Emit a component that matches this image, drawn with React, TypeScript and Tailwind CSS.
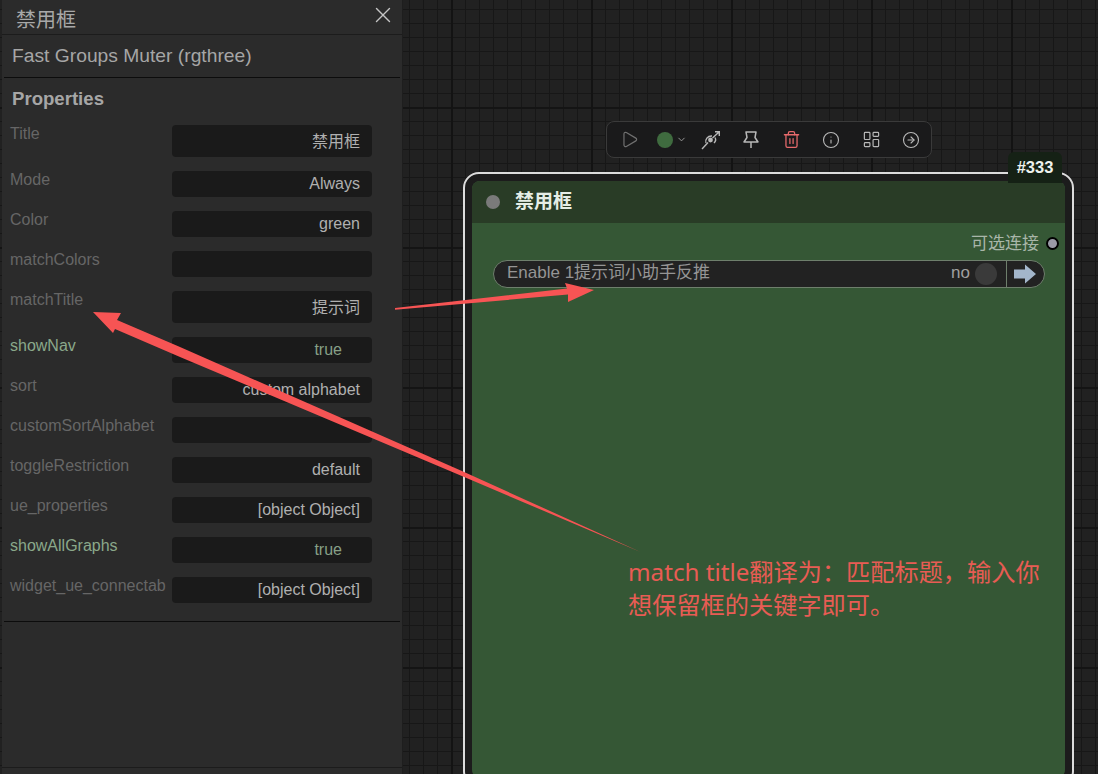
import { ChevronDown, CircleArrowRight, Info, LayoutDashboard, Play, Trash2, X } from "lucide-react"

const rows = [
  { label: "Title", value: "禁用框", tall: true },
  { label: "Mode", value: "Always" },
  { label: "Color", value: "green" },
  { label: "matchColors", value: "" },
  { label: "matchTitle", value: "提示词", tall: true },
  { label: "showNav", value: "true", bool: true },
  { label: "sort", value: "custom alphabet" },
  { label: "customSortAlphabet", value: "" },
  { label: "toggleRestriction", value: "default" },
  { label: "ue_properties", value: "[object Object]" },
  { label: "showAllGraphs", value: "true", bool: true },
  { label: "widget_ue_connectab", value: "[object Object]" },
]

function PropRow({ label, value, tall, bool }: { label: string; value: string; tall?: boolean; bool?: boolean }) {
  return (
    <div className="flex items-start">
      <div className={`w-[162px] shrink-0 whitespace-nowrap text-[16px] leading-[18px] ${bool ? "text-[#8aa88a]" : "text-[#666666]"}`}>
        {label}
      </div>
      <div
        className={`flex w-[200px] items-center justify-end rounded-[4px] bg-[#1a1a1a] text-[16px] ${tall ? "h-8 pt-[2px]" : "h-[26px]"} ${bool ? "pr-[30px] text-[#87a087]" : "pr-3 text-[#b0b0b0]"}`}
      >
        {value}
      </div>
    </div>
  )
}

function Panel() {
  return (
    <div className="ml-[2px] flex h-[774px] w-[401px] shrink-0 flex-col border-r border-[#1e1e1e] bg-[#2b2b2b]">
      <div className="flex h-[35px] shrink-0 items-center justify-between border-b border-[#1c1c1c] pl-[14px] pr-[6px]">
        <span className="pt-[6px] text-[20px] text-[#a8a8a8]">禁用框</span>
        <X size={26} strokeWidth={1.3} className="mb-[5px] text-[#c4c4c4]" />
      </div>
      <div className="mx-[2px] flex h-[43px] shrink-0 items-center border-b border-[#0c0c0c] pl-2 text-[19.25px] text-[#a6a6a6]">
        Fast Groups Muter (rgthree)
      </div>
      <div className="mx-[2px] shrink-0 border-b border-[#0c0c0c] pb-[18px]">
        <div className="h-[47px] pl-2 pt-[10px] text-[18.6px] font-bold leading-[22px] text-[#a6a6a6]">Properties</div>
        <div className="flex flex-col gap-[14px] pl-[6px]">
          {rows.map((r) => (
            <PropRow key={r.label} {...r} />
          ))}
        </div>
      </div>
      <div className="flex-1" />
      <div className="h-[7px] shrink-0 border-t border-[#1c1c1c]" />
    </div>
  )
}

function Toolbar() {
  return (
    <div className="absolute left-[606px] top-[121px] flex h-[37px] w-[326px] items-center rounded-lg border border-[#3a3a3a] bg-[#1a1a1b] pl-[3px] text-[#b8b8b8]">
      <div className="flex w-10 justify-center">
        <Play size={19} strokeWidth={1.5} className="-ml-[2px] text-[#707070]" />
      </div>
      <div className="flex w-[41px] items-center justify-center gap-[3px] pl-[2px]">
        <div className="h-4 w-4 rounded-full bg-[#3f6b3f]" />
        <ChevronDown size={11} strokeWidth={2} className="text-[#a0a0a0]" />
      </div>
      <div className="flex w-10 justify-center">
        <svg width="20" height="20" viewBox="0 0 20 20" fill="none" stroke="currentColor" strokeWidth="1.4">
          <path d="M1 19L7 12.5" />
          <circle cx="9.5" cy="10" r="2.4" fill="currentColor" stroke="none" />
          <path d="M5 13C3.8 9.5 6.5 5.8 11 6" />
          <path d="M14 7.5C15.2 9.5 14.6 11.5 13 13" />
          <path d="M11.5 8L18 2M14 1.8H18.3V6" />
        </svg>
      </div>
      <div className="flex w-10 justify-center">
        <svg width="18" height="20" viewBox="0 0 18 20" fill="none" stroke="currentColor" strokeWidth="1.5">
          <path d="M4 2H14L13 7.5L16 12H2L5 7.5Z" strokeLinejoin="round" />
          <path d="M9 12V18" />
        </svg>
      </div>
      <div className="flex w-10 justify-center">
        <Trash2 size={19} strokeWidth={1.6} className="text-[#e86a6c]" />
      </div>
      <div className="flex w-10 justify-center">
        <Info size={18} strokeWidth={1.5} />
      </div>
      <div className="flex w-10 justify-center">
        <LayoutDashboard size={19} strokeWidth={1.5} />
      </div>
      <div className="flex w-10 justify-center">
        <CircleArrowRight size={18} strokeWidth={1.5} />
      </div>
    </div>
  )
}

function Node() {
  return (
    <div className="absolute left-[463px] top-[172px] h-[615px] w-[611px] rounded-[16px] border-2 border-[#dcdcdc] bg-[#1c1c1c] p-[7px]">
      <div className="absolute right-[10px] top-[-22px] flex h-[31px] w-[54px] items-center justify-center rounded-t-[6px] bg-[#152115] text-[16.5px] font-bold text-[#eef2ee]">
        #333
      </div>
      <div className="flex h-full flex-col overflow-hidden rounded-[8px] bg-[#355735]">
        <div className="flex h-[42px] shrink-0 items-center gap-[15px] bg-[#293c26] pl-[14px]">
          <div className="h-[14px] w-[14px] rounded-full bg-[#7a7a7a]" />
          <span className="text-[19px] font-bold text-[#e6eee6]">禁用框</span>
        </div>
        <div className="flex h-[37px] shrink-0 items-center justify-end gap-[7px] pr-[6px] pt-[4px]">
          <span className="text-[17px] text-[#a9b6a9]">可选连接</span>
          <div className="h-[13px] w-[13px] rounded-full border-2 border-black bg-[#9a9aa6]" />
        </div>
        <div className="mx-[21px] flex h-[28px] w-[552px] items-center rounded-full border-[1.5px] border-[#6e7f6c] bg-[#222222] pl-[13px] text-[17px]">
          <span className="flex-1 pb-[2px] text-[#959595]">Enable 1提示词小助手反推</span>
          <span className="pb-[2px] text-[#a0a0a0]">no</span>
          <div className="ml-[5px] mr-[9px] h-[22px] w-[22px] rounded-full bg-[#3a3a3a]" />
          <div className="flex h-full w-[38px] items-center justify-center border-l-[1.5px] border-[#6e7f6c] pr-[2px]">
            <svg width="22" height="20" viewBox="0 0 22 20">
              <path d="M0 5.5H11V0.5L22 10L11 19.5V14.5H0Z" fill="#a3b6cb" />
            </svg>
          </div>
        </div>
      </div>
    </div>
  )
}

// red annotation arrows drawn over the screenshot
function Annotations() {
  return (
    <>
      <svg className="absolute inset-0" width="1098" height="774" viewBox="0 0 1098 774">
        <path d="M395 308L567 288.5L565 283L594 290L568 302L568 294.5L395 309.8Z" fill="#f75454" />
        <path d="M640.5 552L463 471.5L180 347L117 320L121 313L93 312L113 333L115 329L180 357L463 476.5Z" fill="#f75454" />
      </svg>
      <div className="absolute left-[628px] top-[555px] font-['Noto_Sans','Noto_Sans_CJK_SC',sans-serif] text-[24.2px] leading-[33px] text-[#e85c54]">
        <div>match title翻译为：匹配标题，输入你</div>
        <div>想保留框的关键字即可。</div>
      </div>
    </>
  )
}

export default function App() {
  return (
    <div className="relative h-[774px] w-[1098px] overflow-hidden bg-[#212121] bg-[linear-gradient(to_right,#131313_2px,transparent_2px),linear-gradient(to_bottom,#141414_2px,transparent_2px),linear-gradient(to_right,#171717_1px,transparent_1px),linear-gradient(to_bottom,#171717_1px,transparent_1px)] bg-[size:140px_140px,140px_140px,14px_14px,14px_14px] bg-[position:31px_107px,31px_107px,3px_9px,3px_9px] font-['Liberation_Sans','Noto_Sans_CJK_SC',sans-serif]">
      <Panel />
      <Toolbar />
      <Node />
      <Annotations />
    </div>
  )
}
